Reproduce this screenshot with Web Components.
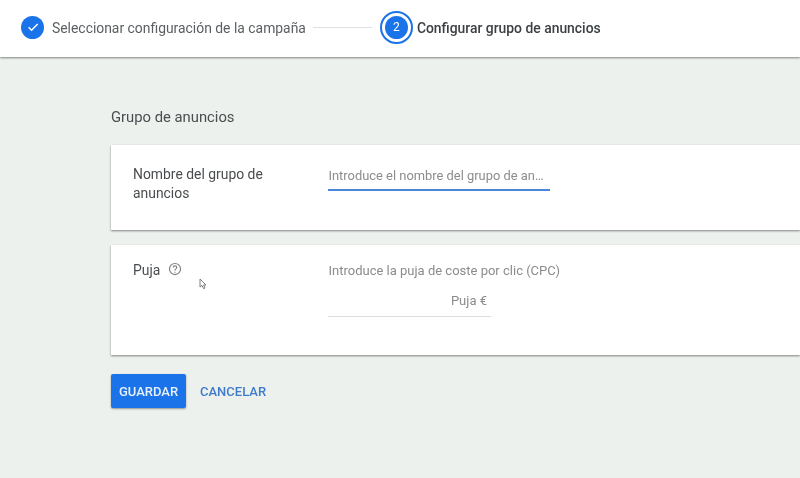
<!DOCTYPE html>
<html>
<head>
<meta charset="utf-8">
<style>
  html, body { margin: 0; height: 100%; overflow: hidden; background: #edf1ee; }
  body { font-family: Roboto, "Liberation Sans", sans-serif; }
</style>
</head>
<body>
<campaign-page></campaign-page>

<script>
class StepHeader extends HTMLElement {
  constructor() {
    super();
    this.shadow = this.attachShadow({ mode: 'open' });
  }

  connectedCallback() {
    this.shadow.innerHTML = /* html */
    `
    <style>
      :host {
        display: flex;
        align-items: center;
        box-sizing: border-box;
        height: 57px;
        padding: 0 0 3px 21px;
        background-color: #fff;
        box-shadow: 0 1px 2px rgba(0, 0, 0, 0.45);
        position: relative;
        font-size: 13.9px;
        color: #5b5f61;
      }
      .text {
        padding-top: 1px;
      }
      .done {
        width: 23px;
        height: 23px;
        border-radius: 50%;
        background-color: #1a73e8;
        display: flex;
        align-items: center;
        justify-content: center;
        margin-right: 8px;
      }
      .line {
        width: 59px;
        height: 1px;
        background-color: #dfe1e1;
        margin: 0 8px 0 7px;
      }
      .current {
        width: 33px;
        height: 33px;
        border-radius: 50%;
        border: 2px solid #1a73e8;
        box-sizing: border-box;
        display: flex;
        align-items: center;
        justify-content: center;
        margin-right: 4px;
      }
      .current span {
        width: 23px;
        height: 23px;
        border-radius: 50%;
        background-color: #1a73e8;
        color: #fff;
        font-size: 12px;
        display: flex;
        align-items: center;
        justify-content: center;
      }
      .active {
        color: #3c4043;
        font-weight: 500;
      }
    </style>
    <div class="done">
      <svg width="14" height="14" viewBox="0 0 24 24" fill="none" stroke="#fff" stroke-width="2.6">
        <path d="M4.5 12.5L9.5 17.5L20 7"/>
      </svg>
    </div>
    <div class="text">Seleccionar configuración de la campaña</div>
    <div class="line"></div>
    <div class="current"><span>2</span></div>
    <div class="text active">Configurar grupo de anuncios</div>
    `;
  }
}

class FormCard extends HTMLElement {
  constructor() {
    super();
    this.shadow = this.attachShadow({ mode: 'open' });
  }

  connectedCallback() {
    this.shadow.innerHTML = /* html */
    `
    <style>
      :host {
        display: grid;
        grid-template-columns: 195px 1fr;
        box-sizing: border-box;
        padding: 20px 22px 0;
        background-color: #fff;
        box-shadow: 0 1px 2px rgba(0, 0, 0, 0.45);
      }
      .label {
        font-size: 13.9px;
        line-height: 19px;
        color: #4a4d4f;
        padding-right: 20px;
      }
    </style>
    <div class="label"><slot name="label"></slot></div>
    <div><slot></slot></div>
    `;
  }
}

class TextField extends HTMLElement {
  constructor() {
    super();
    this.shadow = this.attachShadow({ mode: 'open' });
  }

  connectedCallback() {
    this.shadow.innerHTML = /* html */
    `
    <style>
      :host {
        display: block;
        box-sizing: border-box;
        width: 222px;
        height: 26px;
        padding-left: 0.5px;
        border-bottom: 2px solid #4a86dc;
        font-size: 12.9px;
        line-height: 22px;
        color: #8a8d8c;
        white-space: nowrap;
      }
    </style>
    <slot></slot>
    `;
  }
}

class BidField extends HTMLElement {
  constructor() {
    super();
    this.shadow = this.attachShadow({ mode: 'open' });
  }

  connectedCallback() {
    this.shadow.innerHTML = /* html */
    `
    <style>
      :host {
        display: block;
        font-size: 13px;
        color: #8a8d8c;
      }
      .hint {
        line-height: 17px;
        padding: 1px 0 0 0.5px;
      }
      .input {
        box-sizing: border-box;
        width: 163px;
        height: 27px;
        margin-top: 11px;
        border-bottom: 1px solid #dcdfdf;
        text-align: right;
        padding-right: 4px;
        line-height: 22px;
      }
    </style>
    <div class="hint"><slot name="hint"></slot></div>
    <div class="input"><slot></slot></div>
    `;
  }
}

class CampaignPage extends HTMLElement {
  constructor() {
    super();
    this.shadow = this.attachShadow({ mode: 'open' });
  }

  connectedCallback() {
    this.shadow.innerHTML = /* html */
    `
    <style>
      :host {
        display: flex;
        flex-direction: column;
        height: 478px;
        box-sizing: border-box;
        filter: blur(0.35px);
      }
      main {
        flex: 1;
        padding: 51px 0 0 111px;
        display: flex;
        flex-direction: column;
      }
      h2 {
        margin: 0 0 18px;
        font-size: 14.8px;
        font-weight: 400;
        line-height: 19px;
        color: #4a4d4f;
      }
      .name {
        height: 85px;
        margin-bottom: 15px;
      }
      .bid {
        height: 110px;
        padding-top: 16px;
      }
      .puja {
        display: flex;
        align-items: center;
        gap: 8px;
      }
      .puja svg {
        display: block;
        margin-top: -3px;
      }
      .cursor {
        position: absolute;
        left: 199px;
        top: 278px;
      }
      .actions {
        display: flex;
        align-items: center;
        gap: 14px;
        margin-top: 19px;
      }
      button {
        font: 500 13px Roboto, "Liberation Sans", sans-serif;
        border: none;
        background: none;
        padding: 1px 0 0;
        height: 34px;
        cursor: pointer;
      }
      .save {
        width: 75px;
        background-color: #1a73e8;
        color: #e8f0fe;
        border-radius: 2px;
        box-shadow: 0 1px 2px rgba(0, 0, 0, 0.4);
      }
      .cancel {
        color: #3f7bcb;
      }
    </style>
    <step-header></step-header>
    <main>
      <h2>Grupo de anuncios</h2>
      <form-card class="name">
        <span slot="label">Nombre del grupo de anuncios</span>
        <text-field>Introduce el nombre del grupo de an…</text-field>
      </form-card>
      <form-card class="bid">
        <span slot="label" class="puja">Puja
          <svg width="14" height="14" viewBox="0 0 24 24" fill="#7d8082">
            <path d="M12 1.5A10.5 10.5 0 1 0 22.5 12 10.5 10.5 0 0 0 12 1.5zm0 19A8.5 8.5 0 1 1 20.5 12 8.5 8.5 0 0 1 12 20.5z"/>
            <path d="M11 16.5h2v2h-2zM12 5.5a4 4 0 0 0-4 4h2a2 2 0 0 1 4 0c0 2-3 1.75-3 5h2c0-2.25 3-2.5 3-5a4 4 0 0 0-4-4z"/>
          </svg>
        </span>
        <bid-field>
          <span slot="hint">Introduce la puja de coste por clic (CPC)</span>
          Puja €
        </bid-field>
      </form-card>
      <div class="actions">
        <button class="save">GUARDAR</button>
        <button class="cancel">CANCELAR</button>
      </div>
    </main>
    <svg class="cursor" width="9" height="12" viewBox="0 0 9 12">
      <path d="M1 1V9L3 7.4L4.5 10.6L6 10L4.6 7H7Z" fill="#fff" stroke="#6d7072" stroke-width="0.9"/>
    </svg>
    `;
  }
}

customElements.define('step-header', StepHeader);
customElements.define('form-card', FormCard);
customElements.define('text-field', TextField);
customElements.define('bid-field', BidField);
customElements.define('campaign-page', CampaignPage);
</script>
</body>
</html>
